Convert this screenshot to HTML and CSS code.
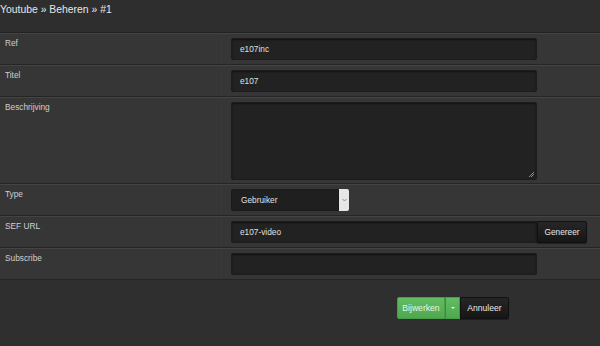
FILE: index.html
```html
<!DOCTYPE html>
<html>
<head>
<meta charset="utf-8">
<link rel="stylesheet" href="styles.css">
</head>
<body>
<div class="page">
  <div class="header">Youtube » Beheren » #1</div>
  <div class="form">
    <div class="row">
      <div class="label">Ref</div>
      <div class="field"><div class="input">e107inc</div></div>
    </div>
    <div class="row">
      <div class="label">Titel</div>
      <div class="field"><div class="input">e107</div></div>
    </div>
    <div class="row row-tall">
      <div class="label">Beschrijving</div>
      <div class="field"><div class="textarea"><span class="grip"></span></div></div>
    </div>
    <div class="row">
      <div class="label">Type</div>
      <div class="field"><div class="select"><span class="select-text">Gebruiker</span><span class="select-arrow"><svg width="5" height="4" viewBox="0 0 5 4"><path d="M0.5 1 L2.5 3 L4.5 1" fill="none" stroke="#777" stroke-width="0.8"/></svg></span></div></div>
    </div>
    <div class="row">
      <div class="label">SEF URL</div>
      <div class="field"><div class="group"><div class="input">e107-video</div><div class="btn-dark addon">Genereer</div></div></div>
    </div>
    <div class="row">
      <div class="label">Subscribe</div>
      <div class="field"><div class="input"></div></div>
    </div>
  </div>
  <div class="footer">
    <div class="actions">
      <div class="btn-green">Bijwerken</div>
      <div class="btn-green caret-btn"><span class="caret"></span></div>
      <div class="btn-dark">Annuleer</div>
    </div>
  </div>
</div>
</body>
</html>
```
FILE: styles.css
```css
html, body {
  margin: 0;
  padding: 0;
  background: #2f2f2f;
  font-family: "Liberation Sans", Arial, sans-serif;
}
.page {
  width: 600px;
  height: 346px;
  display: flex;
  flex-direction: column;
  background: #2f2f2f;
}
.header {
  height: 33px;
  box-sizing: border-box;
  padding: 4px 0 0 0;
  font-size: 10.4px;
  color: #e6e6e6;
  background: #2e2e2e;
  border-bottom: 1px solid #222;
}
.form {
  display: flex;
  flex-direction: column;
  background: #363636;
}
.row {
  display: grid;
  grid-template-columns: 222px 1fr;
  height: 32px;
  box-sizing: border-box;
  border-top: 1px solid #444;
  border-bottom: 1px solid #252525;
}
.row-tall { height: 87px; }
.label {
  font-size: 8.3px;
  color: #cfcfcf;
  padding: 4px 0 0 5px;
  border-right: 1px solid #393939;
}
.field {
  padding: 4px 0 0 9px;
}
.input {
  width: 306px;
  height: 22px;
  box-sizing: border-box;
  background: #222;
  border: 1px solid #1c1c1c;
  box-shadow: inset 0 1px 2px rgba(0,0,0,0.5);
  border-radius: 2px;
  color: #e0e0e0;
  font-size: 8.3px;
  line-height: 20px;
  padding-left: 8px;
}
.textarea {
  position: relative;
  width: 306px;
  height: 78px;
  box-sizing: border-box;
  background: #222;
  border: 1px solid #1c1c1c;
  box-shadow: inset 0 1px 2px rgba(0,0,0,0.5);
  border-radius: 2px;
}
.grip {
  position: absolute;
  right: 2px;
  bottom: 2px;
  width: 5px;
  height: 5px;
  background: linear-gradient(135deg, transparent 45%, #888 45%, #888 55%, transparent 55%, transparent 70%, #888 70%, #888 80%, transparent 80%);
}
.select {
  display: flex;
  width: 118px;
  height: 22px;
}
.select-text {
  flex: 1;
  background: #1f1f1f;
  border: 1px solid #1a1a1a;
  border-radius: 2px 0 0 2px;
  color: #e0e0e0;
  font-size: 8.3px;
  line-height: 20px;
  padding-left: 9px;
}
.select-arrow {
  width: 10px;
  background: #e6e6e6;
  border-radius: 0 2px 2px 0;
  display: flex;
  align-items: center;
  justify-content: center;
}
.group {
  display: flex;
}
.group .input {
  border-radius: 2px 0 0 2px;
}
.btn-dark {
  height: 22px;
  box-sizing: border-box;
  background: linear-gradient(#262626, #161616);
  border: 1px solid #111;
  border-radius: 2px;
  color: #e8e8e8;
  font-size: 8.3px;
  line-height: 20px;
  padding: 0 7px;
  box-shadow: 0 1px 1px rgba(0,0,0,0.4);
}
.addon {
  width: 50px;
  padding: 0;
  text-align: center;
  border-radius: 0 2px 2px 0;
}
.footer {
  flex: 1;
  background: #2f2f2f;
}
.actions {
  display: flex;
  padding: 17px 0 0 397px;
}
.btn-green {
  height: 22px;
  width: 48px;
  box-sizing: border-box;
  background: linear-gradient(#62bd62, #4fa84f);
  border: 1px solid #4a9d4a;
  color: #e8f5e8;
  font-size: 8.6px;
  line-height: 20px;
  text-align: center;
  border-radius: 2px 0 0 2px;
}
.caret-btn {
  width: 15px;
  display: flex;
  align-items: center;
  justify-content: center;
  border-left: 1px solid #3d8a3d;
  border-radius: 0;
}
.caret {
  width: 0;
  height: 0;
  border-left: 2px solid transparent;
  border-right: 2px solid transparent;
  border-top: 2px solid #e8f5e8;
}
.actions .btn-dark {
  border-radius: 0 2px 2px 0;
  width: 49px;
  text-align: center;
  padding: 0;
  font-size: 8.6px;
}
```
